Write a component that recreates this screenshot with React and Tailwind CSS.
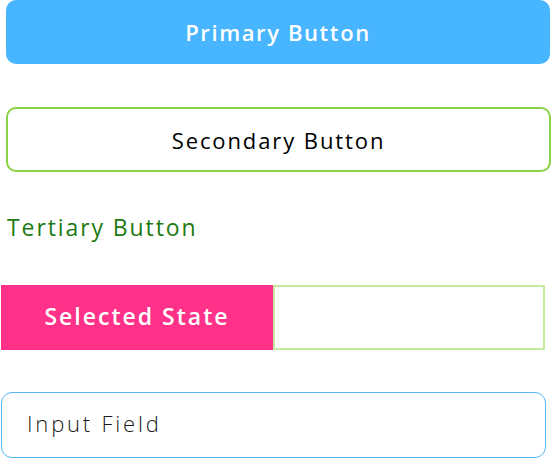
export default function App() {
  const font = { fontFamily: '"Open Sans", "Noto Sans", sans-serif' };
  return (
    <div className="w-[552px] h-[458px] bg-white relative overflow-hidden" style={font}>
      <div className="flex flex-col">
        <button className="ml-[6px] w-[544px] h-[64px] rounded-[10px] bg-[#47b5ff] text-white text-[22px] font-semibold tracking-[1.6px] flex items-center justify-center pt-[1px]">
          Primary Button
        </button>
        <button className="mt-[43px] ml-[6px] w-[545px] h-[65px] rounded-[10px] border-2 border-[#8ad243] bg-white text-black text-[22px] tracking-[1.9px] flex items-center justify-center pt-[1px]">
          Secondary Button
        </button>
        <div className="mt-[40px] ml-[7px] h-[30px] flex items-center text-[23px] text-[#217a10] tracking-[1.9px]">
          Tertiary Button
        </div>
        <div className="mt-[43px] ml-[1px] flex h-[65px]">
          <div className="w-[272px] bg-[#ff3189] text-white text-[23px] font-semibold tracking-[2px] flex items-center justify-center pb-[3px]">
            Selected State
          </div>
          <div className="w-[272px] border-2 border-[#c6eb9f] bg-white"></div>
        </div>
        <div className="mt-[42px] ml-[1px] w-[545px] h-[66px] rounded-[11px] border-[1.5px] border-[#56b7f5] flex items-center pl-[25px] pb-[3px] text-[22px] font-light text-[#1a1a1a] tracking-[2.8px]">
          Input Field
        </div>
      </div>
    </div>
  );
}
